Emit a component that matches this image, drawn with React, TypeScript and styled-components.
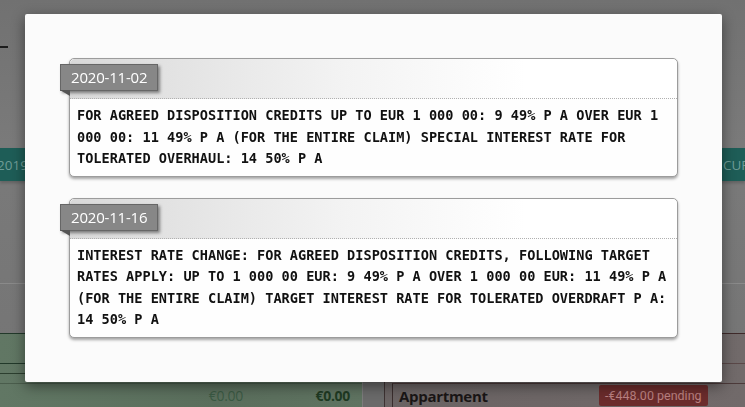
import React from "react";
import styled, { createGlobalStyle } from "styled-components";

const Global = createGlobalStyle`
  html, body {
    margin: 0;
    padding: 0;
    width: 745px;
    height: 407px;
    overflow: hidden;
    background: #767676;
  }
  #root { width: 745px; height: 407px; }
`;

/* ---------- page behind the modal (already dimmed by the backdrop) ---------- */

const Page = styled.div`
  width: 745px;
  height: 407px;
  display: flex;
  flex-direction: column;
  overflow: hidden;
  background: linear-gradient(180deg, #717171 0%, #7a7a7a 35%, #747474 100%);
  font-family: "Open Sans", "Noto Sans", sans-serif;
`;

const TitleArea = styled.div`
  height: 148px;
  padding-top: 46px;
  box-sizing: border-box;
`;

const Dash = styled.div`
  width: 8px;
  height: 2px;
  background: #1c1c1c;
`;

const TealBar = styled.div`
  height: 33px;
  background: #1e5d57;
  display: flex;
  justify-content: space-between;
  align-items: center;
  color: #6f9c96;
  font-size: 13.5px;
  box-shadow: 0 2px 3px rgba(0, 0, 0, 0.2);
`;

const BarLeft = styled.span`
  margin-left: -3px;
  white-space: nowrap;
`;

const BarRight = styled.span`
  width: 22px;
  overflow: hidden;
  white-space: nowrap;
`;

const GrayBlock = styled.div<{ $h: number; $rule?: boolean }>`
  height: ${(p) => p.$h}px;
  border-top: ${(p) => (p.$rule ? "1px solid #8a8a8a" : "none")};
  box-sizing: border-box;
`;

const Columns = styled.div`
  flex: 1;
  display: grid;
  grid-template-columns: 362px 22px 1fr;
`;

const LeftCol = styled.div`
  background: linear-gradient(90deg, #617764 0%, #5a6e5c 60%, #5f7361 100%);
  display: flex;
  flex-direction: column;
`;

const RightCol = styled.div`
  background: linear-gradient(90deg, #6a6363 0%, #716a6a 100%);
  border-left: 1px solid #3d3232;
  display: flex;
  flex-direction: column;
`;

const Gutter = styled.div`
  background: #6a6a6a;
  border-left: 1px solid #7c7c7c;
`;

const Band = styled.div<{ $h: number; $line: string }>`
  height: ${(p) => p.$h}px;
  border-top: 1px solid ${(p) => p.$line};
  box-sizing: border-box;
`;

const MoneyRow = styled.div`
  flex: 1;
  display: flex;
  align-items: center;
  justify-content: flex-end;
  gap: 0;
  border-top: 1px solid #4a5d4c;
`;

const Amount = styled.span<{ $bold?: boolean }>`
  font-size: 14px;
  font-weight: ${(p) => (p.$bold ? 700 : 400)};
  color: ${(p) => (p.$bold ? "#1f3a23" : "#3b5a44")};
  width: ${(p) => (p.$bold ? "107px" : "auto")};
  text-align: right;
  padding-right: ${(p) => (p.$bold ? "12px" : "0")};
  letter-spacing: -0.3px;
`;

const ItemRow = styled.div`
  flex: 1;
  display: flex;
  align-items: center;
  margin-left: 7px;
  padding-left: 6px;
  border-left: 1px solid #3a2e2e;
  border-top: 1px solid #4c3a3a;
`;

const ItemName = styled.span`
  font-size: 15px;
  font-weight: 700;
  color: #1a1616;
  width: 200px;
  letter-spacing: -0.3px;
`;

const Badge = styled.span`
  background: #6b2c2c;
  color: #b98080;
  font-family: Roboto, "Open Sans", sans-serif;
  font-size: 12.5px;
  padding: 2px 6px;
  border-radius: 2px;
  line-height: 17px;
`;

/* ---------- modal ---------- */

const Overlay = styled.div`
  position: fixed;
  inset: 0;
  padding: 14px 23px 0 25px;
`;

const Modal = styled.div`
  width: 697px;
  box-sizing: border-box;
  padding: 44px;
  background: #fbfbfb;
  border-radius: 2px;
  box-shadow: 0 4px 14px rgba(0, 0, 0, 0.45);
  display: flex;
  flex-direction: column;
  gap: 21px;
`;

const Card = styled.div`
  background: #fefefe;
  border: 1px solid #9c9c9c;
  border-radius: 5px;
  box-shadow: 0 2px 3px rgba(0, 0, 0, 0.35);
`;

const CardHead = styled.div`
  position: relative;
  height: 39px;
  border-bottom: 1px dotted #b0b0b0;
  border-radius: 5px 5px 0 0;
  background: linear-gradient(90deg, #d9d9d9 0%, #f3f3f3 45%, #ffffff 75%);
`;

const DateTag = styled.div`
  position: absolute;
  left: -10px;
  top: 5px;
  height: 27px;
  padding: 0 10px;
  box-sizing: border-box;
  background: #878787;
  border: 1px solid #666;
  color: #fff;
  font-family: "Open Sans", "Noto Sans", sans-serif;
  font-size: 15px;
  line-height: 25px;
  letter-spacing: -0.2px;
  box-shadow: 2px 2px 3px rgba(0, 0, 0, 0.45);

  &::after {
    content: "";
    position: absolute;
    left: -1px;
    top: 100%;
    border-top: 6px solid #555;
    border-left: 10px solid transparent;
  }
`;

const CardBody = styled.div`
  padding: 6px 7px 6px 7px;
  font-family: "DejaVu Sans Mono", "Liberation Mono", monospace;
  font-weight: 700;
  font-size: 13.6px;
  line-height: 21.5px;
  color: #111;
`;

const entries = [
  {
    date: "2020-11-02",
    text:
      "FOR AGREED DISPOSITION CREDITS UP TO EUR 1 000 00: 9 49% P A OVER EUR 1 000 00: 11 49% P A (FOR THE ENTIRE CLAIM) SPECIAL INTEREST RATE FOR TOLERATED OVERHAUL: 14 50% P A",
  },
  {
    date: "2020-11-16",
    text:
      "INTEREST RATE CHANGE: FOR AGREED DISPOSITION CREDITS, FOLLOWING TARGET RATES APPLY: UP TO 1 000 00 EUR: 9 49% P A OVER 1 000 00 EUR: 11 49% P A (FOR THE ENTIRE CLAIM) TARGET INTEREST RATE FOR TOLERATED OVERDRAFT P A: 14 50% P A",
  },
];

export default function App() {
  return (
    <>
      <Global />
      <Page>
        <TitleArea>
          <Dash />
        </TitleArea>
        <TealBar>
          <BarLeft>2019</BarLeft>
          <BarRight>CURRENT</BarRight>
        </TealBar>
        <GrayBlock $h={102} />
        <GrayBlock $h={50} $rule />
        <Columns>
          <LeftCol>
            <Band $h={30} $line="#22392a" />
            <Band $h={10} $line="#22392a" />
            <Band $h={10} $line="#2c3f2f" />
            <MoneyRow>
              <Amount>€0.00</Amount>
              <Amount $bold>€0.00</Amount>
            </MoneyRow>
          </LeftCol>
          <Gutter />
          <RightCol>
            <Band $h={30} $line="#3f2a2a" />
            <Band $h={20} $line="#5a4848" />
            <ItemRow>
              <ItemName>Appartment</ItemName>
              <Badge>-€448.00 pending</Badge>
            </ItemRow>
          </RightCol>
        </Columns>
      </Page>
      <Overlay>
        <Modal>
          {entries.map((e) => (
            <Card key={e.date}>
              <CardHead>
                <DateTag>{e.date}</DateTag>
              </CardHead>
              <CardBody>{e.text}</CardBody>
            </Card>
          ))}
        </Modal>
      </Overlay>
    </>
  );
}
